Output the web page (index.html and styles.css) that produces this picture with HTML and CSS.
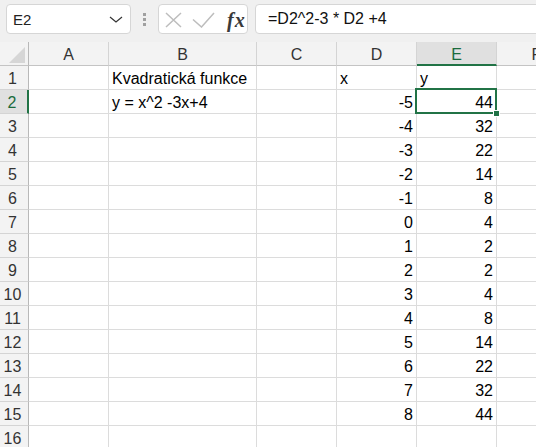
FILE: index.html
```html
<!DOCTYPE html>
<html lang="cs">
<head>
<meta charset="utf-8">
<title>Kvadratická funkce</title>
<link rel="stylesheet" href="styles.css">
</head>
<body>
<div class="app">
  <div class="toolbar">
    <div class="namebox">
      <span class="name">E2</span>
      <svg class="chev" width="14" height="7" viewBox="0 0 14 7"><polyline points="1,1 7,6 13,1" fill="none" stroke="#333" stroke-width="1.2"/></svg>
    </div>
    <div class="grip"><i></i><i></i><i></i></div>
    <div class="fxbox">
      <svg class="ic-x" width="17" height="16" viewBox="0 0 17 16"><path d="M1 1 L16 15 M16 1 L1 15" stroke="#bdbdbd" stroke-width="1.5" fill="none"/></svg>
      <svg class="ic-ok" width="23" height="16" viewBox="0 0 23 16"><polyline points="1,7.5 9.5,15 22,1" stroke="#bdbdbd" stroke-width="1.5" fill="none"/></svg>
      <span class="fx">fx</span>
    </div>
    <div class="formula">=D2^2-3 * D2 +4</div>
  </div>

  <div class="sheet">
    <div class="ch corner"><svg width="16" height="16" viewBox="0 0 16 16"><polygon points="16,0 16,16 0,16" fill="#d6d6d6"/></svg></div>
    <div class="ch">A</div><div class="ch">B</div><div class="ch">C</div><div class="ch">D</div><div class="ch sel-h">E</div><div class="ch">F</div>

    <div class="rh">1</div><div class="c"></div><div class="c">Kvadratická funkce</div><div class="c"></div><div class="c">x</div><div class="c">y</div><div class="c"></div>
    <div class="rh sel-r">2</div><div class="c"></div><div class="c">y = x^2 -3x+4</div><div class="c"></div><div class="c n">-5</div><div class="c n sel">44<span class="handle"></span></div><div class="c"></div>
    <div class="rh">3</div><div class="c"></div><div class="c"></div><div class="c"></div><div class="c n">-4</div><div class="c n">32</div><div class="c"></div>
    <div class="rh">4</div><div class="c"></div><div class="c"></div><div class="c"></div><div class="c n">-3</div><div class="c n">22</div><div class="c"></div>
    <div class="rh">5</div><div class="c"></div><div class="c"></div><div class="c"></div><div class="c n">-2</div><div class="c n">14</div><div class="c"></div>
    <div class="rh">6</div><div class="c"></div><div class="c"></div><div class="c"></div><div class="c n">-1</div><div class="c n">8</div><div class="c"></div>
    <div class="rh">7</div><div class="c"></div><div class="c"></div><div class="c"></div><div class="c n">0</div><div class="c n">4</div><div class="c"></div>
    <div class="rh">8</div><div class="c"></div><div class="c"></div><div class="c"></div><div class="c n">1</div><div class="c n">2</div><div class="c"></div>
    <div class="rh">9</div><div class="c"></div><div class="c"></div><div class="c"></div><div class="c n">2</div><div class="c n">2</div><div class="c"></div>
    <div class="rh">10</div><div class="c"></div><div class="c"></div><div class="c"></div><div class="c n">3</div><div class="c n">4</div><div class="c"></div>
    <div class="rh">11</div><div class="c"></div><div class="c"></div><div class="c"></div><div class="c n">4</div><div class="c n">8</div><div class="c"></div>
    <div class="rh">12</div><div class="c"></div><div class="c"></div><div class="c"></div><div class="c n">5</div><div class="c n">14</div><div class="c"></div>
    <div class="rh">13</div><div class="c"></div><div class="c"></div><div class="c"></div><div class="c n">6</div><div class="c n">22</div><div class="c"></div>
    <div class="rh">14</div><div class="c"></div><div class="c"></div><div class="c"></div><div class="c n">7</div><div class="c n">32</div><div class="c"></div>
    <div class="rh">15</div><div class="c"></div><div class="c"></div><div class="c"></div><div class="c n">8</div><div class="c n">44</div><div class="c"></div>
    <div class="rh">16</div><div class="c"></div><div class="c"></div><div class="c"></div><div class="c"></div><div class="c"></div><div class="c"></div>
    <div class="rh">17</div><div class="c"></div><div class="c"></div><div class="c"></div><div class="c"></div><div class="c"></div><div class="c"></div>
  </div>
</div>
</body>
</html>
```

FILE: styles.css
```css
* { box-sizing: border-box; }
html, body { margin: 0; padding: 0; }
body {
  width: 536px;
  height: 447px;
  overflow: hidden;
  background: #ffffff;
  font-family: "Liberation Sans", Arial, sans-serif;
  color: #000;
}
.app { width: 536px; height: 447px; overflow: hidden; }

.toolbar {
  height: 42px;
  background: #f0f0f0;
  display: flex;
  align-items: flex-start;
  padding: 4px 0 0 6px;
}
.namebox {
  width: 125px;
  height: 30px;
  background: #fff;
  border: 1px solid #d6d6d6;
  border-radius: 4px;
  display: flex;
  align-items: center;
  padding: 2px 7px 0 6px;
  font-size: 15px;
  color: #222;
  flex: none;
}
.name { line-height: 18px; }
.chev { margin-left: auto; margin-top: -1px; }

.grip {
  width: 4px;
  margin: 9px 11px 0 12px;
  display: flex;
  flex-direction: column;
  gap: 2px;
  flex: none;
}
.grip i { display: block; width: 3px; height: 3px; background: #a0a0a0; }

.fxbox {
  width: 90px;
  height: 30px;
  background: #fff;
  border: 1px solid #d6d6d6;
  border-radius: 4px;
  display: flex;
  align-items: center;
  padding: 0 0 0 6px;
  flex: none;
}
.ic-x { margin-top: 1px; }
.ic-ok { margin-left: 10px; margin-top: 1px; }
.fx {
  margin-left: 12px;
  font-family: "Liberation Serif", "DejaVu Serif", serif;
  font-style: italic;
  font-weight: bold;
  font-size: 20px;
  letter-spacing: 1px;
  color: #3a3a3a;
  line-height: 20px;
  margin-top: 1px;
}

.formula {
  flex: 1;
  height: 30px;
  margin-left: 7px;
  margin-right: -20px;
  background: #fff;
  border: 1px solid #d6d6d6;
  border-radius: 4px;
  padding: 0 0 0 12px;
  font-size: 16px;
  line-height: 28px;
  color: #111;
  white-space: nowrap;
}

.sheet {
  display: grid;
  grid-template-columns: 29px 80px 148px 80px 80px 80px 80px;
  grid-auto-rows: 24px;
  font-size: 16px;
}
.sheet > div {
  height: 24px;
  padding: 2px 3px 0 3px;
  line-height: 21px;
  white-space: nowrap;
}
.c {
  border-right: 1px solid #dcdcdc;
  border-bottom: 1px solid #dcdcdc;
  background: #fff;
}
.n { text-align: right; }

.ch {
  background: #f3f3f3;
  border-right: 1px solid #d4d4d4;
  border-bottom: 1px solid #c4c4c4;
  text-align: center;
  color: #333;
}
.corner {
  display: flex;
  justify-content: flex-end;
  align-items: flex-end;
  padding: 0 3px 2px 0 !important;
  border-right: 1px solid #b8b8b8;
}
.sel-h {
  background: #e0e0e0;
  color: #1a6b3c;
  border-bottom: 2px solid #217346;
}

.rh {
  background: #f3f3f3;
  border-right: 1px solid #b8b8b8;
  border-bottom: 1px solid #d4d4d4;
  text-align: center;
  color: #333;
  padding: 2px 3px 0 0 !important;
}
.sel-r {
  background: #e0e0e0;
  color: #1a6b3c;
  border-right: 2px solid #217346;
}

.sel { position: relative; }
.sel::after {
  content: "";
  position: absolute;
  left: -2px;
  top: -2px;
  right: -1px;
  bottom: -1px;
  border: 2px solid #217346;
  pointer-events: none;
}
.handle {
  position: absolute;
  right: -4px;
  bottom: -4px;
  width: 7px;
  height: 7px;
  background: #217346;
  border: 1px solid #fff;
  z-index: 2;
}
```
